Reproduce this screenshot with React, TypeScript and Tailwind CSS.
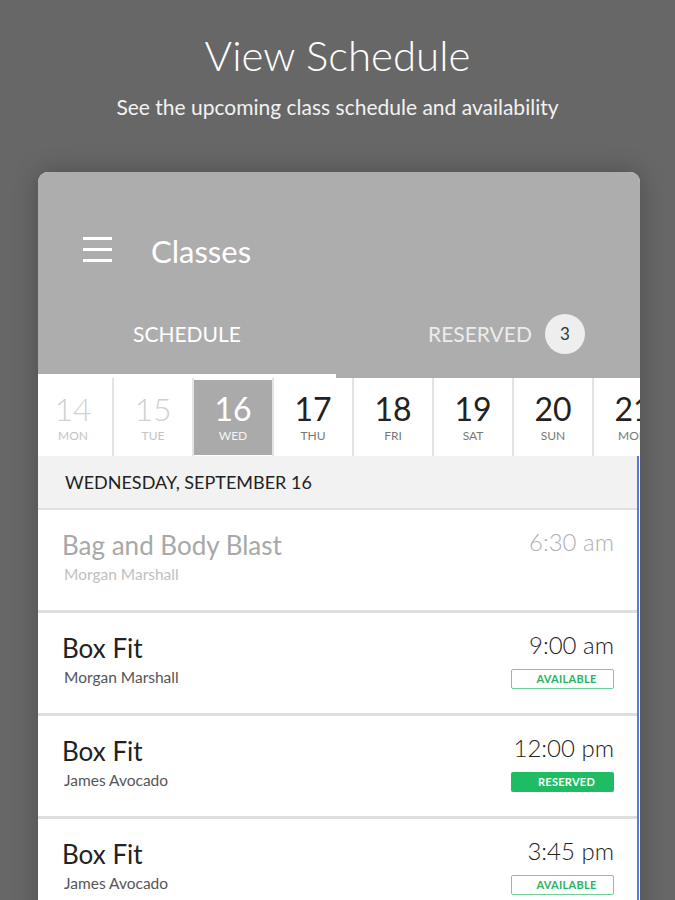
import React from "react";

type Day = { num: number; label: string; state: "past" | "active" | "future" };

const days: Day[] = [
  { num: 14, label: "MON", state: "past" },
  { num: 15, label: "TUE", state: "past" },
  { num: 16, label: "WED", state: "active" },
  { num: 17, label: "THU", state: "future" },
  { num: 18, label: "FRI", state: "future" },
  { num: 19, label: "SAT", state: "future" },
  { num: 20, label: "SUN", state: "future" },
  { num: 21, label: "MON", state: "future" },
];

type ClassItem = {
  title: string;
  instructor: string;
  time: string;
  status?: "available" | "reserved";
  past?: boolean;
};

const classes: ClassItem[] = [
  { title: "Bag and Body Blast", instructor: "Morgan Marshall", time: "6:30 am", past: true },
  { title: "Box Fit", instructor: "Morgan Marshall", time: "9:00 am", status: "available" },
  { title: "Box Fit", instructor: "James Avocado", time: "12:00 pm", status: "reserved" },
  { title: "Box Fit", instructor: "James Avocado", time: "3:45 pm", status: "available" },
];

const StatusBadge: React.FC<{ status: "available" | "reserved" }> = ({ status }) => {
  if (status === "reserved") {
    return (
      <div className="mt-[9px] flex h-[20px] w-[103px] items-center justify-center rounded-[2px] bg-[#1fbd63] pl-2 text-[11px] font-bold tracking-wide text-white">
        RESERVED
      </div>
    );
  }
  return (
    <div className="mt-[9px] flex h-[20px] w-[103px] items-center justify-center rounded-[2px] border-[1.5px] border-[#6fcf97] bg-white pl-2 text-[11px] font-bold tracking-wide text-[#27b463]">
      AVAILABLE
    </div>
  );
};

export default function App() {
  return (
    <div
      className="h-[900px] w-[675px] overflow-hidden bg-[#676767]"
      style={{ fontFamily: "Lato, 'Open Sans', sans-serif" }}
    >
      {/* Heading */}
      <div className="pt-[28px] text-center text-white">
        <h1 className="text-[42px] leading-[54px] font-light">View Schedule</h1>
        <p className="mt-[12px] text-[21px] leading-[26px] text-[#f2f2f2]">
          See the upcoming class schedule and availability
        </p>
      </div>

      {/* Phone card */}
      <div className="mt-[52px] ml-[38px] h-[760px] w-[602px] overflow-hidden rounded-t-[10px] bg-white shadow-[0_0_24px_rgba(0,0,0,0.25)]">
        {/* App bar */}
        <div className="bg-[#adadad]">
          <div className="flex h-[148px] items-end pb-[51px]">
            <div className="mb-[7px] ml-[45px] flex w-[29px] flex-col gap-[8px]">
              <span className="h-[3px] bg-white" />
              <span className="h-[3px] bg-white" />
              <span className="h-[3px] bg-white" />
            </div>
            <span className="ml-[39px] text-[31px] leading-[36px] text-white">Classes</span>
          </div>
          <div className="flex h-[54px]">
            <div className="flex w-[298px] items-start justify-center pt-[1px] text-[21px] leading-[26px] text-white">
              SCHEDULE
            </div>
            <div className="flex flex-1 items-start justify-center pt-[1px] pr-[16px]">
              <div className="relative text-[21px] leading-[26px] text-[#ececec]">
                RESERVED
                <span className="absolute top-1/2 left-full ml-[13px] flex h-[40px] w-[40px] -translate-y-1/2 items-center justify-center rounded-full bg-[#eeeeee] text-[17px] text-[#333]">
                  3
                </span>
              </div>
            </div>
          </div>
          <div className="flex h-[4px]">
            <div className="w-[298px] bg-white" />
          </div>
        </div>

        {/* Date strip */}
        <div className="-ml-[4px] flex h-[78px] bg-white">
          {days.map((d, i) => (
            <div
              key={i}
              className="flex h-full w-[80px] shrink-0 border-r-2 border-[#e4e4e4] pt-[2px] pb-[1px]"
            >
              <div
                className={`flex h-full w-full flex-col items-center justify-center ${
                  d.state === "active" ? "bg-[#aaaaaa]" : ""
                }`}
              >
                <span
                  className={`text-[32px] leading-[34px] ${
                    d.state === "past"
                      ? "font-light text-[#d0d0d0]"
                      : d.state === "active"
                      ? "text-white"
                      : "text-[#222]"
                  }`}
                >
                  {d.num}
                </span>
                <span
                  className={`mt-[3px] text-[12px] leading-[14px] ${
                    d.state === "past"
                      ? "text-[#c4c4c4]"
                      : d.state === "active"
                      ? "text-[#f4f4f4]"
                      : "text-[#777]"
                  }`}
                >
                  {d.label}
                </span>
              </div>
            </div>
          ))}
        </div>

        {/* List */}
        <div className="w-[601px] border-r-2 border-[#5577e0]">
          <div className="flex h-[54px] items-center border-b-2 border-[#e0e0e0] bg-[#f2f2f2] pl-[27px] text-[18px] text-[#222]">
            WEDNESDAY, SEPTEMBER 16
          </div>
          {classes.map((c, i) => (
            <div
              key={i}
              className="flex h-[103px] justify-between border-b-[3px] border-[#dedede] pr-[23px] pl-[24px]"
            >
              <div className="pt-[19px]">
                <div
                  className={`text-[26px] leading-[32px] ${
                    c.past ? "text-[#a8a8a8]" : "text-[#222]"
                  }`}
                >
                  {c.title}
                </div>
                <div
                  className={`mt-[3px] pl-[2px] text-[15.5px] leading-[20px] ${
                    c.past ? "text-[#c0c0c0]" : "text-[#555]"
                  }`}
                >
                  {c.instructor}
                </div>
              </div>
              <div className="flex flex-col items-end pt-[17px]">
                <div
                  className={`text-[24px] leading-[30px] font-light ${
                    c.past ? "text-[#b0b0b0]" : "text-[#222]"
                  }`}
                >
                  {c.time}
                </div>
                {c.status && <StatusBadge status={c.status} />}
              </div>
            </div>
          ))}
        </div>
      </div>
    </div>
  );
}
